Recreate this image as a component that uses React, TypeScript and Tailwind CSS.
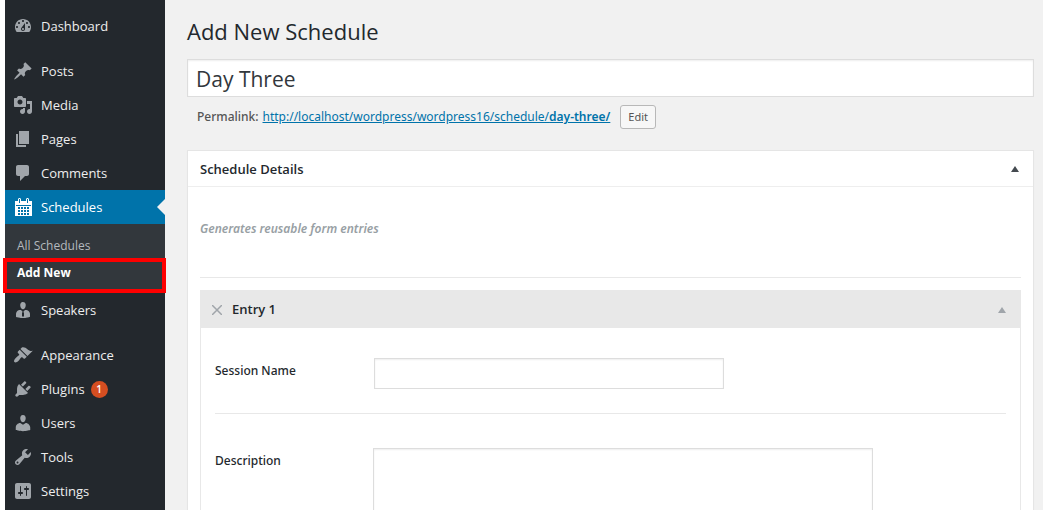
import { useState } from "react";

type MenuItem = {
  label: string;
  icon: string;
  count?: number;
  children?: string[];
};

// 20x20 glyphs for the admin menu
const icons: Record<string, string> = {
  dashboard:
    "M3.76 16h12.48c1.1-1.37 1.76-3.11 1.76-5 0-4.42-3.58-8-8-8s-8 3.58-8 8c0 1.89.66 3.63 1.76 5zM10 4c.55 0 1 .45 1 1s-.45 1-1 1-1-.45-1-1 .45-1 1-1zM6 6c.55 0 1 .45 1 1s-.45 1-1 1-1-.45-1-1 .45-1 1-1zm8 0c.55 0 1 .45 1 1s-.45 1-1 1-1-.45-1-1 .45-1 1-1zm-5.37 5.55L12 7v6c0 1.1-.9 2-2 2s-2-.9-2-2c0-.57.24-1.08.63-1.45zM4 10c.55 0 1 .45 1 1s-.45 1-1 1-1-.45-1-1 .45-1 1-1zm12 0c.55 0 1 .45 1 1s-.45 1-1 1-1-.45-1-1 .45-1 1-1zm-5 3c0-.55-.45-1-1-1s-1 .45-1 1 .45 1 1 1 1-.45 1-1z",
  post: "M10.44 3.02l1.82-1.82 6.36 6.35-1.83 1.82c-1.05-.68-2.48-.57-3.41.36l-.75.75c-.92.93-1.04 2.35-.35 3.41l-1.83 1.82-2.41-2.41-2.8 2.79c-.42.42-3.38 2.71-3.8 2.29s1.86-3.39 2.28-3.81l2.79-2.79L4.1 9.36l1.83-1.82c1.05.69 2.48.57 3.4-.36l.75-.75c.93-.92 1.05-2.35.36-3.41z",
  media:
    "M13 11V4c0-.55-.45-1-1-1h-1.67L9 1H5L3.67 3H2c-.55 0-1 .45-1 1v7c0 .55.45 1 1 1h10c.55 0 1-.45 1-1zM7 4.5c1.38 0 2.5 1.12 2.5 2.5S8.38 9.5 7 9.5 4.5 8.38 4.5 7 5.62 4.5 7 4.5zM14 6h5v10.5c0 1.38-1.12 2.5-2.5 2.5S14 17.88 14 16.5s1.12-2.5 2.5-2.5c.17 0 .34.02.5.05V9h-3V6zm-4 8.05V13h2v3.5c0 1.38-1.12 2.5-2.5 2.5S7 17.88 7 16.5 8.12 14 9.5 14c.17 0 .34.02.5.05z",
  page: "M6 15V2h10v13H6zm-1 1h8v2H3V5h2v11z",
  comment:
    "M5 2h9c1.1 0 2 .9 2 2v7c0 1.1-.9 2-2 2h-2l-5 5v-5H5c-1.1 0-2-.9-2-2V4c0-1.1.9-2 2-2z",
  calendar:
    "M2 4h3V2.5C5 1.7 5.7 1 6.5 1S8 1.7 8 2.5V4h5V2.5C13 1.7 13.7 1 14.5 1S16 1.7 16 2.5V4h3v15H2zM6 2v4h1V2zM14 2v4h1V2zM3 8v1h15V8zM5 10v2h2v-2zM8 10v2h2v-2zM11 10v2h2v-2zM14 10v2h2v-2zM5 13v2h2v-2zM8 13v2h2v-2zM11 13v2h2v-2zM14 13v2h2v-2zM5 16v2h2v-2zM8 16v2h2v-2zM11 16v2h2v-2zM14 16v2h2v-2z",
  businessman:
    "M7.3 6l-.03-.19c-.04-.37-.05-.73-.03-1.08.02-.36.1-.71.25-1.04.14-.32.31-.61.52-.86s.49-.46.83-.6c.34-.15.72-.23 1.13-.23.69 0 1.26.2 1.71.59s.76.87.91 1.44.18 1.16.09 1.78l-.03.19c-.01.09-.05.25-.11.48-.05.24-.12.47-.2.69-.08.21-.19.45-.34.72-.14.27-.3.49-.47.69-.18.19-.4.34-.67.48-.27.13-.55.19-.86.19s-.59-.06-.87-.19c-.26-.13-.49-.29-.67-.5-.18-.2-.34-.42-.49-.66-.15-.25-.26-.49-.34-.73-.09-.25-.16-.47-.21-.67-.06-.21-.1-.37-.12-.5zm9.2 6.24c.41.7.5 1.41.5 2.14v2.49c0 .03-.12.08-.29.13-.18.04-.42.13-.97.27-.55.12-1.1.24-1.65.34s-1.19.19-1.95.27c-.75.08-1.46.12-2.13.12-.68 0-1.39-.04-2.14-.12-.75-.07-1.4-.17-1.98-.27-.58-.11-1.08-.23-1.56-.34-.49-.11-.8-.21-1.06-.29L3 16.87v-2.49c0-.75.07-1.46.46-2.15s.81-1.25 1.5-1.68C5.66 10.12 7.19 10 8 10l1.67 1.67L9 13v3l1.02 1.08L11 16v-3l-.68-1.33L11.97 10c.77 0 2.2.07 2.9.52.71.45 1.21 1.02 1.63 1.72z",
  appearance:
    "M14.48 11.06L7.41 3.99l1.5-1.5c.5-.56 2.3-.47 3.51.32 1.21.8 1.43 1.28 2.91 2.1 1.18.64 2.45 1.26 4.45.85zm-.71.71L6.7 4.7 4.93 6.47c-.39.39-.39 1.02 0 1.41l1.06 1.06c.39.39.39 1.03 0 1.42-.6.6-1.43 1.11-2.21 1.69-.35.26-.7.53-1.01.84C1.43 14.23.4 16.08 1.4 17.07c.99 1 2.84-.03 4.18-1.36.31-.31.58-.66.85-1.02.57-.78 1.08-1.61 1.69-2.21.39-.39 1.02-.39 1.41 0l1.06 1.06c.39.39 1.02.39 1.41 0z",
  plugins:
    "M13.11 4.36L9.87 7.6 8 5.73l3.24-3.24c.35-.34 1.05-.2 1.56.32.52.51.66 1.21.31 1.55zm-8 1.77l.91-1.12 9.01 9.01-1.19.84c-.71.71-2.63 1.16-3.82 1.16H6.14L4.9 17.26c-.59.59-1.54.59-2.12 0-.59-.58-.59-1.53 0-2.12l1.24-1.24v-3.88c0-1.13.4-3.19 1.09-3.89zm7.26 3.97l3.24-3.24c.34-.35 1.04-.21 1.55.31.52.51.66 1.21.31 1.55l-3.24 3.25z",
  users:
    "M10 9.25c-2.27 0-2.73-3.44-2.73-3.44C7 4.02 7.82 2 9.97 2c2.16 0 2.98 2.02 2.71 3.81 0 0-.41 3.44-2.68 3.44zm0 2.57L12.72 10c2.39 0 4.52 2.33 4.52 4.53v2.49s-3.65 1.13-7.24 1.13c-3.65 0-7.24-1.13-7.24-1.13v-2.49c0-2.25 1.94-4.48 4.47-4.48z",
  tools:
    "M16.68 9.77c-1.34 1.34-3.3 1.67-4.95.99l-5.41 6.52c-.99.99-2.59.99-3.58 0s-.99-2.59 0-3.57l6.52-5.42c-.68-1.65-.35-3.61.99-4.95 1.28-1.28 3.12-1.62 4.72-1.06l-2.89 2.89 2.82 2.82 2.86-2.87c.53 1.58.18 3.39-1.08 4.65zM3.81 16.21c.4.39 1.04.39 1.43 0 .4-.4.4-1.04 0-1.43-.39-.4-1.03-.4-1.43 0-.39.39-.39 1.03 0 1.43z",
  settings:
    "M18 16V4c0-1.1-.9-2-2-2H4c-1.1 0-2 .9-2 2v12c0 1.1.9 2 2 2h12c1.1 0 2-.9 2-2zM8 11h1c.55 0 1 .45 1 1s-.45 1-1 1H8v1.5c0 .28-.22.5-.5.5s-.5-.22-.5-.5V13H6c-.55 0-1-.45-1-1s.45-1 1-1h1V5.5c0-.28.22-.5.5-.5s.5.22.5.5V11zm5-2h-1c-.55 0-1-.45-1-1s.45-1 1-1h1V5.5c0-.28.22-.5.5-.5s.5.22.5.5V7h1c.55 0 1 .45 1 1s-.45 1-1 1h-1v5.5c0 .28-.22.5-.5.5s-.5-.22-.5-.5V9z",
};

// each group is separated by a small gap
const menu: MenuItem[][] = [
  [{ label: "Dashboard", icon: "dashboard" }],
  [
    { label: "Posts", icon: "post" },
    { label: "Media", icon: "media" },
    { label: "Pages", icon: "page" },
    { label: "Comments", icon: "comment" },
    {
      label: "Schedules",
      icon: "calendar",
      children: ["All Schedules", "Add New"],
    },
    { label: "Speakers", icon: "businessman" },
  ],
  [
    { label: "Appearance", icon: "appearance" },
    { label: "Plugins", icon: "plugins", count: 1 },
    { label: "Users", icon: "users" },
    { label: "Tools", icon: "tools" },
    { label: "Settings", icon: "settings" },
  ],
];

const SideMenuItem = ({ item }: { item: MenuItem }) => {
  const active = Boolean(item.children);

  return (
    <li>
      <a
        href="#"
        className={`relative flex h-[34px] items-center text-[13px] leading-5 ${
          active ? "bg-[#0073aa] text-white" : "text-[#eeeeee]"
        }`}
      >
        <span className="flex w-9 shrink-0 justify-center">
          <svg
            viewBox="0 0 20 20"
            className={`size-5 ${active ? "fill-white" : "fill-[#a0a5aa]"}`}
          >
            <path fillRule="evenodd" d={icons[item.icon]} />
          </svg>
        </span>
        <span>{item.label}</span>
        {item.count && (
          <span className="ml-1.5 flex size-[17px] items-center justify-center rounded-full bg-[#d54e21] text-[10px] font-semibold text-white">
            {item.count}
          </span>
        )}
        {active && (
          <span className="absolute top-1/2 right-0 -translate-y-1/2 border-8 border-transparent border-r-[#f1f1f1]" />
        )}
      </a>

      {item.children && (
        <ul className="bg-[#32373c] pt-2 text-[12px]">
          {item.children.map((child) =>
            child === "Add New" ? (
              <li key={child} className="relative h-[34px]">
                <a
                  href="#"
                  className="flex h-7 items-center pl-3 font-bold text-white"
                >
                  {child}
                </a>
                {/* highlight frame */}
                <span className="pointer-events-none absolute -top-px -right-px bottom-0 -left-0.5 border-4 border-[#fe0000]" />
              </li>
            ) : (
              <li key={child}>
                <a
                  href="#"
                  className="flex h-[27px] items-center pl-3 text-[#b4b9be]"
                >
                  {child}
                </a>
              </li>
            ),
          )}
        </ul>
      )}
    </li>
  );
};

const Triangle = ({ className }: { className: string }) => (
  <svg viewBox="0 0 8 6" className={`h-1.5 w-2 ${className}`}>
    <path d="M4 0l4 6H0z" />
  </svg>
);

const App = () => {
  const [title, setTitle] = useState("Day Three");
  const [session, setSession] = useState("");
  const [description, setDescription] = useState("");

  return (
    <div className="flex h-screen overflow-hidden bg-white pl-[5px] font-['Open_Sans','Noto_Sans',sans-serif] text-[#23282d]">
      {/* admin menu */}
      <nav className="z-10 flex w-40 shrink-0 flex-col gap-[11px] bg-[#23282d] pt-[9px]">
        {menu.map((group) => (
          <ul key={group[0].label}>
            {group.map((item) => (
              <SideMenuItem key={item.label} item={item} />
            ))}
          </ul>
        ))}
      </nav>

      {/* editor */}
      <main className="min-w-0 flex-1 bg-[#f1f1f1] pt-[15px] pr-[9px] pl-[22px]">
        <h1 className="text-[22px] leading-8">Add New Schedule</h1>

        <input
          type="text"
          aria-label="Title"
          value={title}
          onChange={(e) => setTitle(e.target.value)}
          className="mt-3 block h-[38px] w-full border border-[#dddddd] bg-white px-2 pt-0.5 text-[21px] text-[#32373c] shadow-[inset_0_1px_2px_rgba(0,0,0,0.07)] outline-none"
        />

        <div className="mt-2 flex h-6 items-center pl-2.5 font-['Noto_Sans',sans-serif] text-[12px] text-[#555555]">
          <span className="mr-1 font-medium">Permalink:</span>
          <a href="#" className="text-[#0073aa] underline">
            http://localhost/wordpress/wordpress16/schedule/
            <span className="font-semibold">day-three/</span>
          </a>
          <button
            type="button"
            className="ml-2.5 h-6 rounded-[3px] border border-[#b8b8b8] bg-[#f7f7f7] px-[7px] text-[11px] text-[#555555]"
          >
            Edit
          </button>
        </div>

        <section className="mt-[21px] border border-[#e5e5e5] bg-white shadow-[0_1px_1px_rgba(0,0,0,0.04)]">
          <div className="flex h-9 items-center justify-between border-b border-[#eeeeee] pr-3.5 pl-3">
            <h2 className="text-[13px] leading-5 font-semibold">
              Schedule Details
            </h2>
            <button type="button" aria-label="Toggle Schedule Details">
              <Triangle className="fill-[#444a50]" />
            </button>
          </div>

          <div className="px-3">
            <p className="border-b border-[#e8e8e8] pt-[33px] pb-[39px] font-['Noto_Sans',sans-serif] text-[12px] leading-[18px] font-semibold text-[#98a0a4] italic">
              Generates reusable form entries
            </p>

            <div className="mt-3 border border-[#e8e8e8]">
              <div className="flex h-[37px] items-center bg-[#e8e8e8] pr-3.5 pl-[11px]">
                <button type="button" aria-label="Remove entry">
                  <svg
                    viewBox="0 0 10 10"
                    className="size-2.5 fill-none stroke-[#a0a5aa]"
                  >
                    <path d="M0 0l10 10M10 0L0 10" strokeWidth="1.5" />
                  </svg>
                </button>
                <h3 className="ml-2.5 flex-1 text-[13px] font-semibold">
                  Entry 1
                </h3>
                <button type="button" aria-label="Toggle entry">
                  <Triangle className="fill-[#a0a5aa]" />
                </button>
              </div>

              <div className="px-3.5 font-['Noto_Sans',sans-serif] text-[12px] font-medium">
                <div className="flex border-b border-[#e8e8e8] pt-[30px] pb-6">
                  <label htmlFor="session" className="w-[159px] shrink-0 pt-1">
                    Session Name
                  </label>
                  <input
                    id="session"
                    type="text"
                    value={session}
                    onChange={(e) => setSession(e.target.value)}
                    className="h-[31px] w-[350px] min-w-0 border border-[#dddddd] px-2 font-normal shadow-[inset_0_1px_2px_rgba(0,0,0,0.07)] outline-none"
                  />
                </div>
                <div className="flex py-[34px]">
                  <label
                    htmlFor="description"
                    className="w-[158px] shrink-0 pt-1"
                  >
                    Description
                  </label>
                  <textarea
                    id="description"
                    rows={6}
                    value={description}
                    onChange={(e) => setDescription(e.target.value)}
                    className="w-[500px] min-w-0 resize-none border border-[#dddddd] p-2 font-normal shadow-[inset_0_1px_2px_rgba(0,0,0,0.07)] outline-none"
                  />
                </div>
              </div>
            </div>
          </div>
        </section>
      </main>
    </div>
  );
};

export default App;
